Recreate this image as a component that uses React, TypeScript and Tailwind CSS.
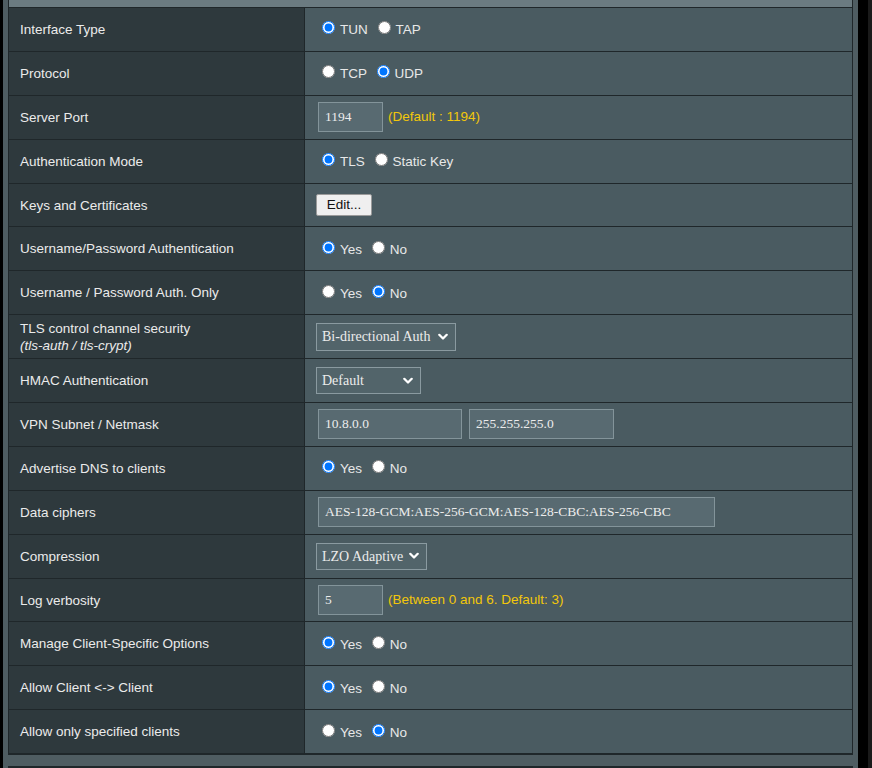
import React from "react";

const sans = { fontFamily: '"Liberation Sans", Arial, sans-serif' };

function Radios({ name, options, checked }: { name: string; options: string[]; checked: number }) {
  return (
    <div className="text-[13.5px] text-[#e8e8e8] whitespace-nowrap">
      {options.map((o, i) => (
        <React.Fragment key={o}>
          <input
            type="radio"
            name={name}
            defaultChecked={i === checked}
            className="ml-[6px] mr-[5px] mt-[3px] w-[13px] h-[13px]"
          />
          {o}
          {i < options.length - 1 ? " " : ""}
        </React.Fragment>
      ))}
    </div>
  );
}

function TextInput({ value, w }: { value: string; w: string }) {
  return (
    <input
      type="text"
      defaultValue={value}
      className={`ml-[2px] h-[30px] ${w} bg-[#586a71] border border-[#83949a] px-[6px] text-[13.5px] text-[#ececec] outline-none`}
      style={{ fontFamily: '"Liberation Serif", "Times New Roman", serif' }}
    />
  );
}

function Select({ value, w, h }: { value: string; w: string; h: string }) {
  return (
    <div className={`relative ${w} ${h}`}>
      <select
        defaultValue={value}
        className={`appearance-none w-full h-full bg-[#52646a] border border-[#8a9aa0] pl-[5px] pr-[20px] text-[14px] text-[#ececec] outline-none`}
        style={{ fontFamily: '"Liberation Serif", "Times New Roman", serif' }}
      >
        <option>{value}</option>
      </select>
      <svg
        className="absolute right-[8px] top-1/2 -translate-y-1/2 pointer-events-none"
        width="10"
        height="7"
        viewBox="0 0 10 7"
      >
        <polyline points="1.3,1.3 5,5 8.7,1.3" fill="none" stroke="#ffffff" strokeWidth="2.3" strokeLinecap="round" strokeLinejoin="round" />
      </svg>
    </div>
  );
}

const Hint = ({ children }: { children: React.ReactNode }) => (
  <span className="ml-[5px] text-[13.5px] text-[#f2c70a]">{children}</span>
);

type Row = { label: string; sub?: string; content: React.ReactNode };

const rows: Row[] = [
  { label: "Interface Type", content: <Radios name="iface" options={["TUN", "TAP"]} checked={0} /> },
  { label: "Protocol", content: <Radios name="proto" options={["TCP", "UDP"]} checked={1} /> },
  {
    label: "Server Port",
    content: (
      <div className="flex items-center">
        <TextInput value="1194" w="w-[65px]" />
        <Hint>(Default : 1194)</Hint>
      </div>
    ),
  },
  { label: "Authentication Mode", content: <Radios name="auth" options={["TLS", "Static Key"]} checked={0} /> },
  {
    label: "Keys and Certificates",
    content: (
      <button className="h-[22px] w-[56px] bg-[#efefef] border border-[#9a9a9a] rounded-[2px] text-[13.5px] text-[#111]">
        Edit...
      </button>
    ),
  },
  { label: "Username/Password Authentication", content: <Radios name="upa" options={["Yes", "No"]} checked={0} /> },
  { label: "Username / Password Auth. Only", content: <Radios name="upo" options={["Yes", "No"]} checked={1} /> },
  {
    label: "TLS control channel security",
    sub: "(tls-auth / tls-crypt)",
    content: <Select value="Bi-directional Auth" w="w-[140px]" h="h-[28px]" />,
  },
  { label: "HMAC Authentication", content: <Select value="Default" w="w-[105px]" h="h-[27px]" /> },
  {
    label: "VPN Subnet / Netmask",
    content: (
      <div className="flex items-center gap-[5px]">
        <TextInput value="10.8.0.0" w="w-[144px]" />
        <TextInput value="255.255.255.0" w="w-[145px]" />
      </div>
    ),
  },
  { label: "Advertise DNS to clients", content: <Radios name="dns" options={["Yes", "No"]} checked={0} /> },
  {
    label: "Data ciphers",
    content: <TextInput value="AES-128-GCM:AES-256-GCM:AES-128-CBC:AES-256-CBC" w="w-[397px]" />,
  },
  { label: "Compression", content: <Select value="LZO Adaptive" w="w-[111px]" h="h-[27px]" /> },
  {
    label: "Log verbosity",
    content: (
      <div className="flex items-center">
        <TextInput value="5" w="w-[65px]" />
        <Hint>(Between 0 and 6. Default: 3)</Hint>
      </div>
    ),
  },
  { label: "Manage Client-Specific Options", content: <Radios name="ccd" options={["Yes", "No"]} checked={0} /> },
  { label: "Allow Client <-> Client", content: <Radios name="c2c" options={["Yes", "No"]} checked={0} /> },
  { label: "Allow only specified clients", content: <Radios name="only" options={["Yes", "No"]} checked={1} /> },
];

export default function App() {
  return (
    <div className="w-[872px] h-[768px] bg-black flex overflow-hidden" style={sans}>
      <div className="ml-[3px] w-[855px] h-full bg-[#4f5d62] px-[5px] flex flex-col">
        <div className="border-x border-b border-[#1f272a] flex flex-col">
          <div className="h-[8px] bg-[#6b7b81] border-b border-[#1f272a]" />
          {rows.map((r) => (
            <div key={r.label} className="flex h-[43.9px] border-b border-[#1f272a]">
              <div className="w-[296px] shrink-0 bg-[#2e393d] border-r border-[#1f272a] pl-[11px] flex flex-col justify-center text-[13.5px] text-[#ebebeb] leading-[17px]">
                <span>{r.label}</span>
                {r.sub && <span className="italic">{r.sub}</span>}
              </div>
              <div className="flex-1 bg-[#4a5b61] pl-[11px] flex items-center">{r.content}</div>
            </div>
          ))}
        </div>
        <div className="mt-[11px] flex-1 border border-[#1f272a] bg-[#4a5b61]" />
      </div>
      <div className="w-[10px] h-full bg-black" />
      <div className="flex-1 h-full bg-[#1a1a1a]" />
    </div>
  );
}
